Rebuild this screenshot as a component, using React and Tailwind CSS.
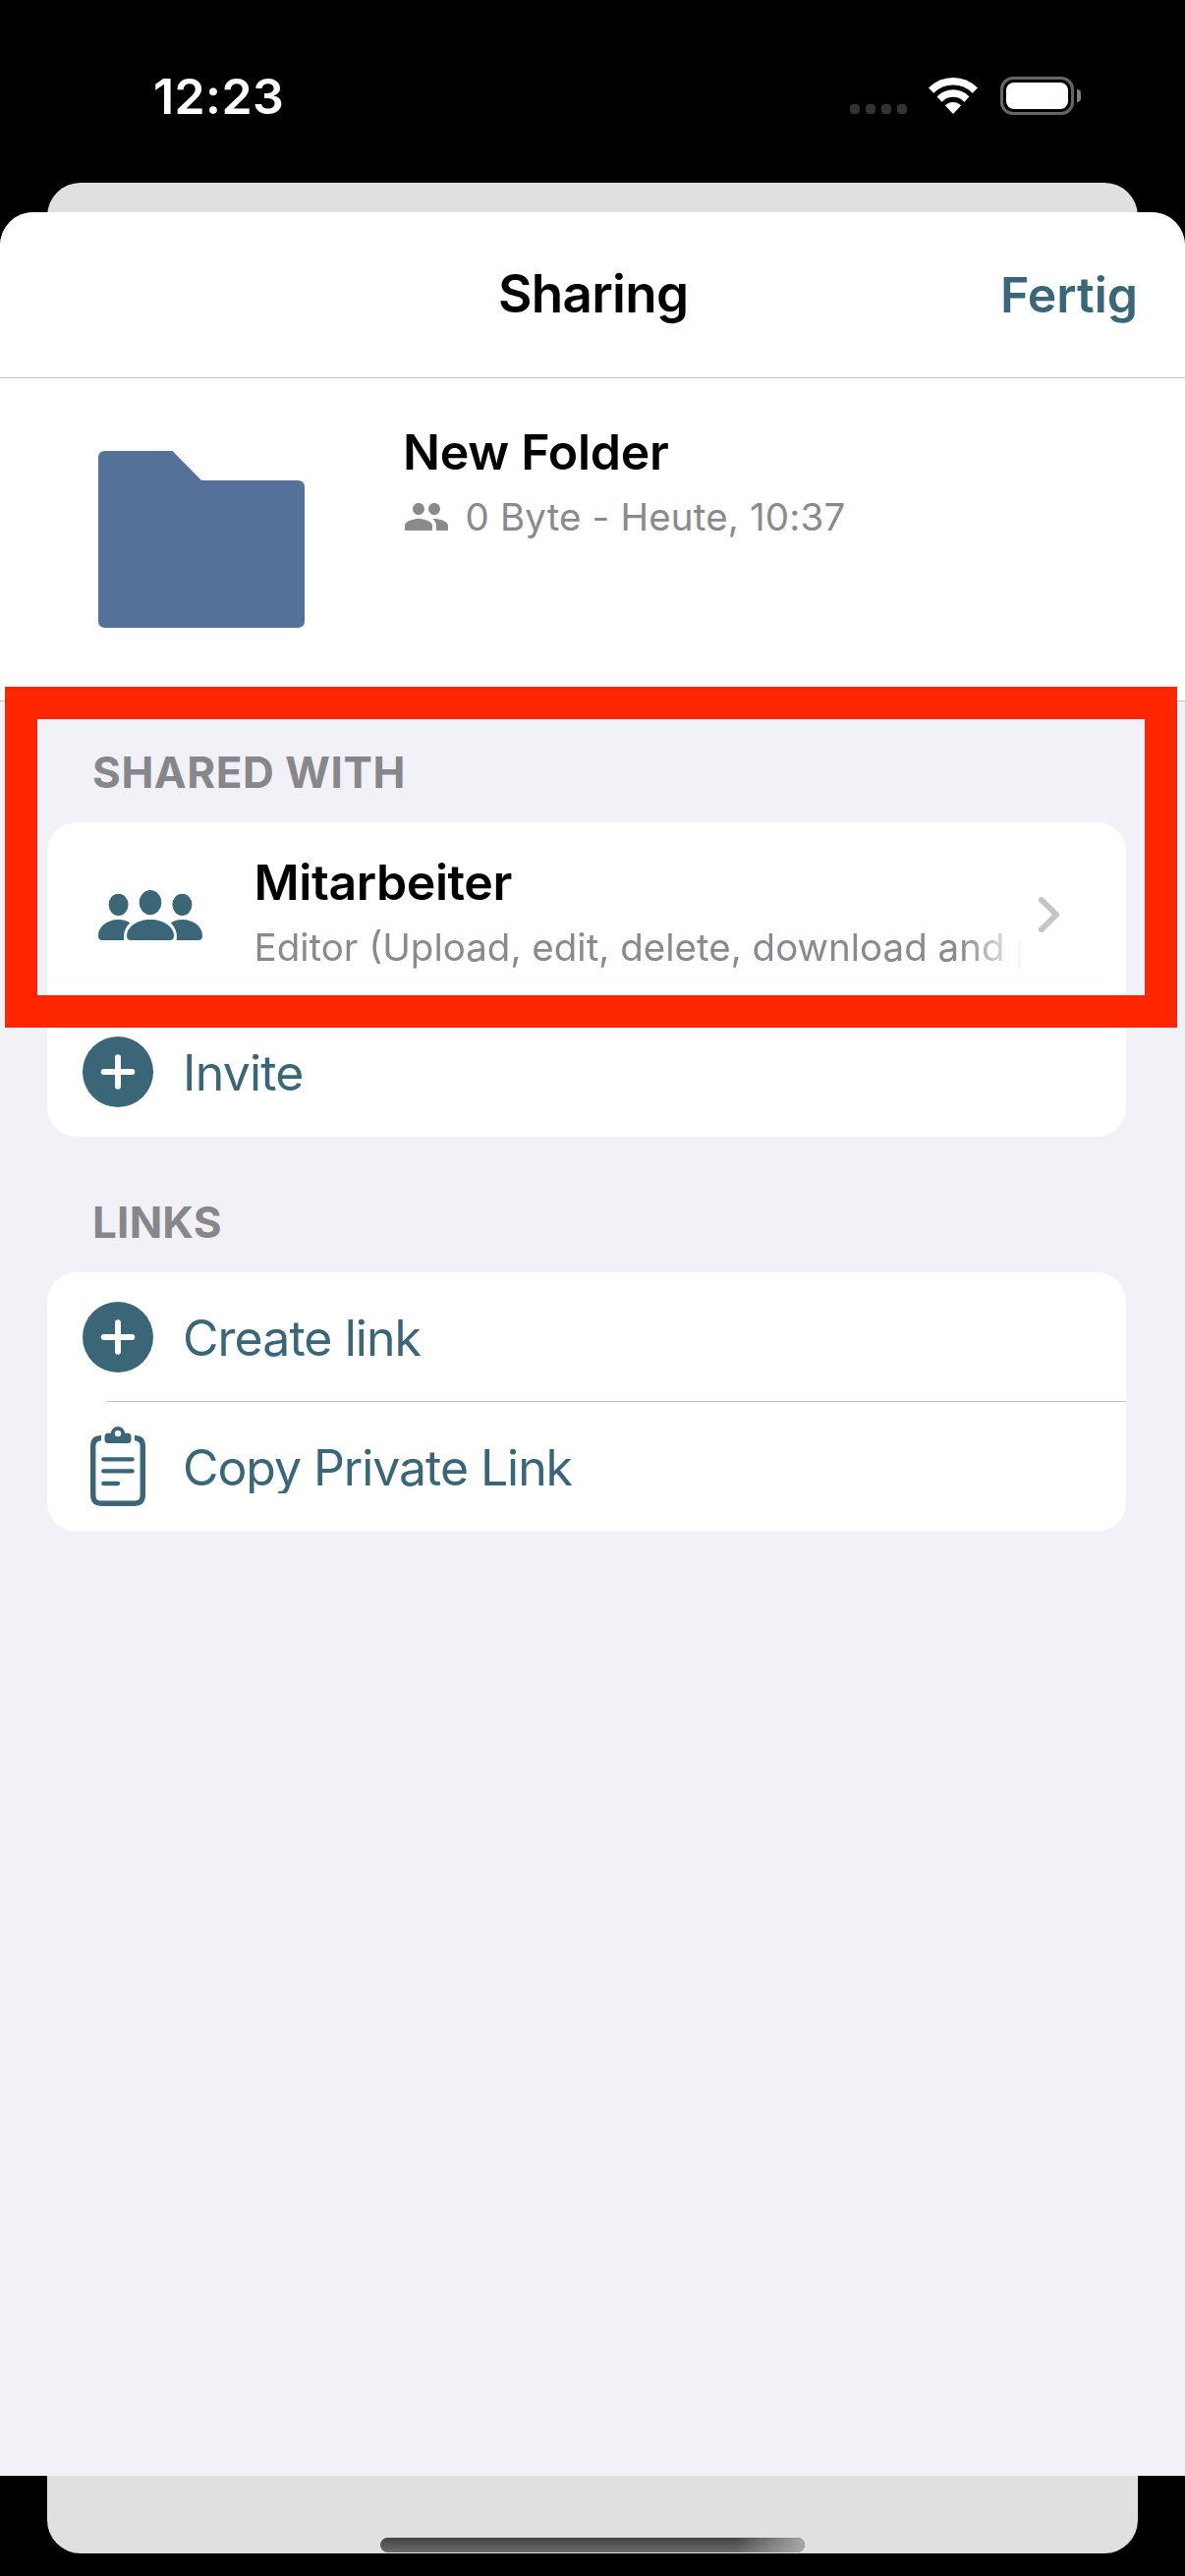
import React from "react";
import { MdPeople } from "react-icons/md";

function StatusBar() {
  return (
    <div className="flex h-[186px] items-start bg-black pl-[156px] pr-[106px] text-white">
      <div className="mt-[68px] text-[50px] font-semibold leading-[60px] tracking-[0.4px]">12:23</div>
      <div className="ml-auto mt-[78px] flex h-[39px] items-start">
        <div className="mt-[28px] flex gap-[6px]">
          {[0, 1, 2, 3].map((i) => (
            <span key={i} className="h-[10px] w-[10px] rounded-[4px] bg-[#333333]" />
          ))}
        </div>
        <svg className="ml-[22px] mt-px h-[37px] w-[50px]" viewBox="0 0 50 37">
          <clipPath id="wedge">
            <path d="M25 37 L-9.7 0 H59.7 Z" />
          </clipPath>
          <g clipPath="url(#wedge)">
            <circle cx="25" cy="35" r="31.3" fill="none" stroke="#fff" strokeWidth="7.4" />
            <circle cx="25" cy="35" r="19" fill="none" stroke="#fff" strokeWidth="7.4" />
            <circle cx="25" cy="36.5" r="11.5" fill="#fff" />
          </g>
        </svg>
        <div className="ml-[23px] flex items-center">
          <div className="h-[39px] w-[75px] rounded-[13px] border-3 border-[#666666] p-[3px]">
            <div className="h-full w-full rounded-[8px] bg-white" />
          </div>
          <div className="ml-[3px] h-[13px] w-[4px] rounded-r-full bg-[#808080]" />
        </div>
      </div>
    </div>
  );
}

function FolderIcon() {
  return (
    <svg className="h-[180px] w-[210px]" viewBox="0 0 210 180">
      <path
        d="M7 0 H75.5 L105 30 H203 Q210 30 210 37 V173 Q210 180 203 180 H7 Q0 180 0 173 V7 Q0 0 7 0 Z"
        fill="#557199"
      />
    </svg>
  );
}

function GroupIcon() {
  return (
    <svg className="h-[52px] w-[106px]" viewBox="0 0 106 52" fill="#3a6677">
      <ellipse cx="20.6" cy="14.8" rx="10" ry="11.1" />
      <ellipse cx="53" cy="12.6" rx="11.3" ry="12.6" />
      <ellipse cx="85.4" cy="14.8" rx="10" ry="11.1" />
      <path d="M29 46.5 C29 38 39 30 53 30 C67 30 77 38 77 46.5 Q77 51 73 51 H33 Q29 51 29 46.5 Z" />
      <path d="M0 46.5 C0 38 8 30 20.8 30 C25.5 30 29.5 31.3 32.3 33.5 C28 37.5 25.2 43 26.3 51 H4 Q0 51 0 46.5 Z" />
      <path d="M106 46.5 C106 38 98 30 85.2 30 C80.5 30 76.5 31.3 73.7 33.5 C78 37.5 80.8 43 79.7 51 H102 Q106 51 106 46.5 Z" />
    </svg>
  );
}

function PlusIcon() {
  return (
    <svg className="h-[72px] w-[72px]" viewBox="0 0 72 72">
      <circle cx="36" cy="36" r="36" fill="#3a6677" />
      <path d="M36 21.2 V50.8 M21.7 36 H50.3" stroke="#fff" strokeWidth="6" strokeLinecap="round" />
    </svg>
  );
}

function ClipboardIcon() {
  return (
    <svg className="mb-[2px] h-[81px] w-[56px]" viewBox="0 0 56 81">
      <g fill="none" stroke="#3a6677">
        <path
          d="M11 11.8 C5.5 11.8 2.7 14.5 2.7 20 V69.5 C2.7 75.5 5.3 78.2 11 78.2 H45 C50.7 78.2 53.3 75.5 53.3 69.5 V20 C53.3 14.5 50.5 11.8 45 11.8"
          strokeWidth="5.4"
        />
        <path d="M13.3 33.3 H42.7 M13.3 45.4 H42.7 M13.3 58 H28" strokeWidth="4.3" strokeLinecap="round" />
      </g>
      <path
        fillRule="evenodd"
        fill="#3a6677"
        d="M18 6.8 H20.8 C21.5 2.8 24.3 0 28 0 C31.7 0 34.5 2.8 35.2 6.8 H38 Q41.5 6.8 41.5 10.3 V13.5 Q41.5 17 38 17 H18 Q14.5 17 14.5 13.5 V10.3 Q14.5 6.8 18 6.8 Z M28 3.9 A3.2 3.2 0 1 0 28 10.3 A3.2 3.2 0 1 0 28 3.9 Z"
      />
    </svg>
  );
}

function SectionTitle({ children, className }) {
  return (
    <h2 className={`pl-[94px] text-[44px] font-bold leading-[52px] text-[#86868b] ${className}`}>{children}</h2>
  );
}

function Card({ children }) {
  return <div className="ml-12 mt-[25px] w-[1098px] overflow-hidden rounded-[30px] bg-white">{children}</div>;
}

function ActionRow({ icon, children, className }) {
  return (
    <div className="flex h-[132px] items-center pl-9 text-[50px] text-[#3a6677]">
      <div className="flex w-[72px] justify-center">{icon}</div>
      <div className={`ml-[30px] ${className}`}>{children}</div>
    </div>
  );
}

export default function App() {
  return (
    <div className="relative h-[2622px] w-[1206px] overflow-hidden bg-black font-['Inter','Liberation_Sans',sans-serif]">
      <StatusBar />

      {/* Presenting screen behind the sheet */}
      <div className="mx-12 h-[2413px] rounded-[34px] bg-[#e0e0e0]" />

      {/* Sheet */}
      <div className="absolute inset-x-0 top-[216px] h-[2304px] overflow-hidden rounded-t-[34px] bg-[#f2f1f7]">
        <header className="flex h-[169px] items-baseline border-b border-[#c4c4c6] bg-white pl-[507px] pr-[48px] leading-[166px]">
          <h1 className="text-[53px] font-semibold tracking-[-0.7px] text-black">Sharing</h1>
          <span className="ml-auto text-[50px] font-semibold text-[#3a6677]">Fertig</span>
        </header>

        <div className="flex h-[329px] items-start border-b border-[#c4c4c6] bg-white pl-[100px]">
          <div className="mt-[74px]">
            <FolderIcon />
          </div>
          <div className="ml-[100px] mt-[45px]">
            <div className="text-[50px] font-semibold leading-[60px] tracking-[-0.27px] text-black">New Folder</div>
            <div className="mt-3 flex items-center text-[#8a8a8e]">
              <MdPeople className="h-12 w-12" />
              <span className="ml-[15.5px] text-[38.5px] leading-[48px] tracking-[0.16px]">0 Byte - Heute, 10:37</span>
            </div>
          </div>
        </div>

        <SectionTitle className="mt-[46px] tracking-[0.57px]">SHARED WITH</SectionTitle>
        <Card>
          <div className="flex h-[188px] items-start pl-[52px]">
            <div className="mt-[69px]">
              <GroupIcon />
            </div>
            <div className="ml-[52.5px] mt-[31px] w-[784px]">
              <div className="text-[50px] font-semibold leading-[60px] tracking-[-0.4px] text-black">Mitarbeiter</div>
              <div className="mt-3 overflow-hidden whitespace-nowrap text-[38.5px] leading-[48px] text-[#8a8a8e] [mask-image:linear-gradient(to_right,black_calc(100%-64px),transparent)]">
                Editor (Upload, edit, delete, download and preview)
              </div>
            </div>
            <svg className="ml-[14px] mt-[76px] h-[36px] w-[21px]" viewBox="0 0 21 36">
              <path d="M3 3 L18 18 L3 33" fill="none" stroke="#c5c5c7" strokeWidth="6" strokeLinecap="round" strokeLinejoin="round" />
            </svg>
          </div>
          <ActionRow icon={<PlusIcon />} className="pt-[2px] tracking-[-0.8px]">
            Invite
          </ActionRow>
        </Card>

        <SectionTitle className="mt-[61px] tracking-[0.2px]">LINKS</SectionTitle>
        <Card>
          <ActionRow icon={<PlusIcon />} className="pt-[2px] tracking-[-0.95px]">
            Create link
          </ActionRow>
          <div className="-mt-px ml-[60px] h-px bg-[#c4c4c6]" />
          <ActionRow icon={<ClipboardIcon />} className="h-[54px] overflow-hidden leading-[56px] tracking-[-1.08px]">
            Copy Private Link
          </ActionRow>
        </Card>
      </div>

      {/* Highlight frame */}
      <div className="absolute left-[4.5px] top-[699px] h-[347px] w-[1193px] border-33 border-[#ff2600]" />

      {/* Home indicator */}
      <div className="absolute left-[387px] top-[2583px] h-[15px] w-[432px] overflow-hidden rounded-full bg-linear-to-b from-[#444444] to-[#6c6c6c]">
        <div className="ml-auto h-full w-[70px] bg-linear-to-r from-transparent to-[#a8a8a8]" />
      </div>
    </div>
  );
}
